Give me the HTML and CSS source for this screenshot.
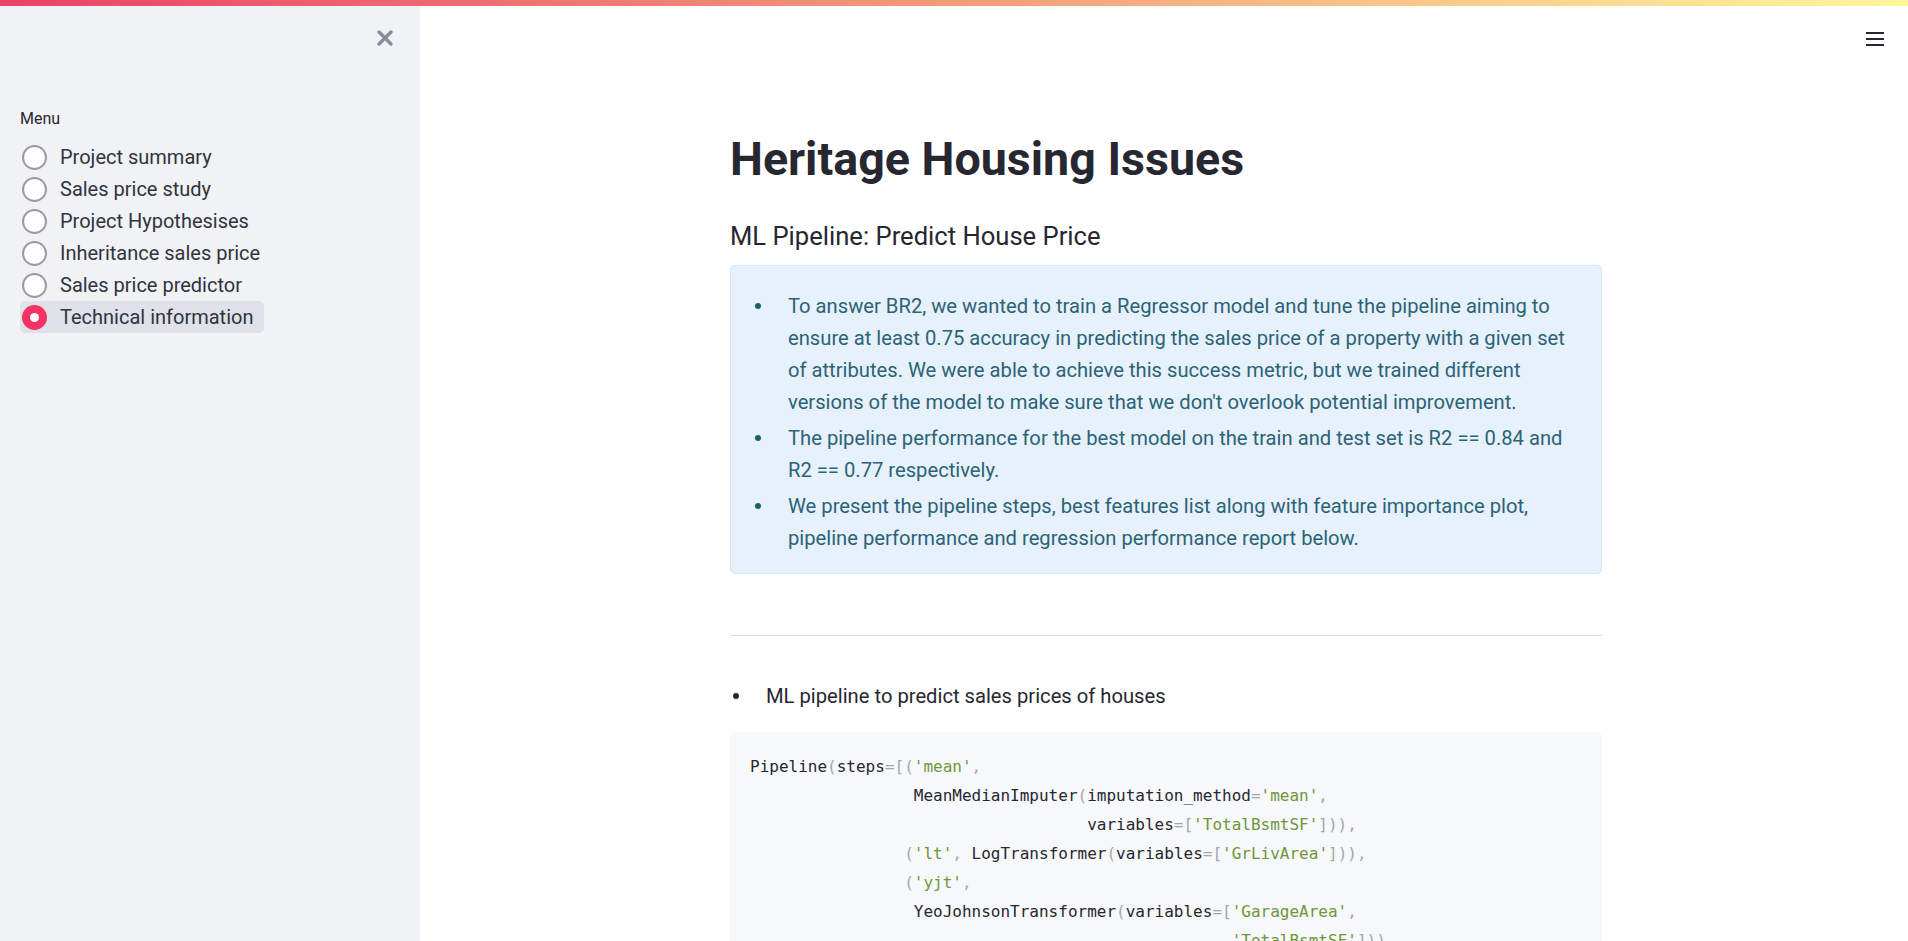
FILE: index.html
```html
<!DOCTYPE html>
<html lang="en">
<head>
<meta charset="utf-8">
<title>Heritage Housing Issues</title>
<link rel="stylesheet" href="styles.css">
</head>
<body>
<div class="decoration"></div>
<div class="app">
  <aside class="sidebar">
    <div class="sidebar-top">
      <button class="close-btn" aria-label="Close sidebar">
        <svg width="18" height="18" viewBox="0 0 18 18"><path d="M3 3 L15 15 M15 3 L3 15" stroke="#8a8d99" stroke-width="3.4" stroke-linecap="round"/></svg>
      </button>
    </div>
    <div class="menu-label">Menu</div>
    <div class="radio-group">
      <label class="radio"><span class="radio-circle"></span><span>Project summary</span></label>
      <label class="radio"><span class="radio-circle"></span><span>Sales price study</span></label>
      <label class="radio"><span class="radio-circle"></span><span>Project Hypothesises</span></label>
      <label class="radio"><span class="radio-circle"></span><span>Inheritance sales price</span></label>
      <label class="radio"><span class="radio-circle"></span><span>Sales price predictor</span></label>
      <label class="radio selected"><span class="radio-circle"></span><span>Technical information</span></label>
    </div>
  </aside>
  <main class="main">
    <header class="toolbar">
      <button class="menu-btn" aria-label="Menu">
        <svg width="18" height="16" viewBox="0 0 18 16"><rect x="0" y="1" width="18" height="2"/><rect x="0" y="7" width="18" height="2"/><rect x="0" y="13" width="18" height="2"/></svg>
      </button>
    </header>
    <div class="block">
      <h1 class="title">Heritage Housing Issues</h1>
      <h3 class="subtitle">ML Pipeline: Predict House Price</h3>
      <div class="alert-info">
        <ul class="bullets">
          <li>To answer BR2, we wanted to train a Regressor model and tune the pipeline aiming to ensure at least 0.75 accuracy in predicting the sales price of a property with a given set of attributes. We were able to achieve this success metric, but we trained different versions of the model to make sure that we don't overlook potential improvement.</li>
          <li>The pipeline performance for the best model on the train and test set is R2 == 0.84 and R2 == 0.77 respectively.</li>
          <li>We present the pipeline steps, best features list along with feature importance plot, pipeline performance and regression performance report below.</li>
        </ul>
      </div>
      <hr class="divider">
      <ul class="bullets plain">
        <li>ML pipeline to predict sales prices of houses</li>
      </ul>
<pre class="code"><code>Pipeline<span class="p">(</span>steps<span class="p">=[(</span><span class="s">'mean'</span><span class="p">,</span>
                 MeanMedianImputer<span class="p">(</span>imputation_method<span class="p">=</span><span class="s">'mean'</span><span class="p">,</span>
                                   variables<span class="p">=[</span><span class="s">'TotalBsmtSF'</span><span class="p">])),</span>
                <span class="p">(</span><span class="s">'lt'</span><span class="p">,</span> LogTransformer<span class="p">(</span>variables<span class="p">=[</span><span class="s">'GrLivArea'</span><span class="p">])),</span>
                <span class="p">(</span><span class="s">'yjt'</span><span class="p">,</span>
                 YeoJohnsonTransformer<span class="p">(</span>variables<span class="p">=[</span><span class="s">'GarageArea'</span><span class="p">,</span>
                                                  <span class="s">'TotalBsmtSF'</span><span class="p">])),</span></code></pre>
    </div>
  </main>
</div>
</body>
</html>
```

FILE: styles.css
```css
* { box-sizing: border-box; }
html, body { margin: 0; padding: 0; }
body {
  width: 1908px;
  height: 941px;
  overflow: hidden;
  background: #ffffff;
  color: #262730;
  font-family: Roboto, "Noto Sans", sans-serif;
}
.decoration {
  position: fixed;
  top: 0; left: 0; right: 0;
  height: 6px;
  background: linear-gradient(90deg, #ea4268, #f39b79 50%, #fff79b);
  z-index: 10;
}
.app { display: flex; height: 941px; }
.sidebar {
  width: 420px;
  flex: 0 0 420px;
  background: #f0f2f6;
  padding: 0 20px;
}
.sidebar-top { height: 95px; display: flex; justify-content: flex-end; align-items: flex-start; padding-top: 29px; padding-right: 6px; }
.close-btn { border: 0; background: transparent; padding: 0; width: 18px; height: 18px; display: block; cursor: pointer; }
.close-btn svg { display: block; }
.menu-label { font-size: 16px; line-height: 20px; color: #262730; margin-top: 14px; }
.radio-group { display: flex; flex-direction: column; align-items: flex-start; margin-top: 12px; }
.radio {
  display: inline-flex;
  align-items: center;
  height: 32px;
  padding: 0 11px 0 2px;
  gap: 13px;
  font-size: 20px;
  color: #31333f;
  border-radius: 5px;
}
.radio-circle {
  width: 25px; height: 25px;
  border-radius: 50%;
  border: 2px solid #9a9ca4;
  background: #fff;
  flex: 0 0 25px;
  display: flex; align-items: center; justify-content: center;
}
.radio.selected { background: #dfe2e9; }
.radio.selected .radio-circle { background: #f43365; border-color: #f43365; }
.radio.selected .radio-circle::after { content: ""; width: 9px; height: 9px; border-radius: 50%; background: #fff; }

.main { flex: 1; position: relative; display: flex; flex-direction: column; align-items: center; }
.toolbar { position: absolute; top: 31px; right: 24px; }
.menu-btn { border: 0; background: transparent; padding: 0; width: 18px; height: 16px; cursor: pointer; display: block; }
.menu-btn svg { display: block; fill: #262730; }
.block { width: 872px; margin-left: 4px; padding-top: 131px; }
.title {
  margin: 0;
  font-size: 46.6px;
  line-height: 56px;
  font-weight: 700;
  color: #262730;
}
.subtitle {
  margin: 34px 0 0;
  font-size: 25.6px;
  line-height: 30px;
  font-weight: 400;
  color: #262730;
}
.alert-info {
  margin-top: 14px;
  background: #e6f1fb;
  border: 1px solid #d3e5f7;
  border-radius: 5px;
  padding: 24px 20px 19px;
  color: #2c6377;
}
.bullets { list-style: none; margin: 0; padding: 0; font-size: 20.2px; line-height: 32px; }
.bullets li { display: flex; align-items: flex-start; margin-bottom: 4px; }
.bullets li:last-child { margin-bottom: 0; }
.bullets li::before {
  content: "";
  flex: 0 0 6px;
  width: 6px; height: 6px;
  border-radius: 50%;
  background: #1e5d70;
  margin: 13px 27px 0 4px;
}
.divider { border: 0; border-top: 1px solid #dcdde0; margin: 61px 0 0; height: 0; }
.plain { margin-top: 44px; color: #262730; }
.plain li::before { background: #262730; margin: 13px 27px 0 3px; }
.code {
  margin: 20px 0 0;
  background: #f7f8fa;
  border-radius: 5px;
  padding: 21px 20px;
  font-family: "Liberation Mono", "DejaVu Sans Mono", monospace;
  font-size: 16px;
  line-height: 28px;
  color: #262730;
}
.code .p { color: #a2a6ad; }
.code .s { color: #6e963a; }
```
